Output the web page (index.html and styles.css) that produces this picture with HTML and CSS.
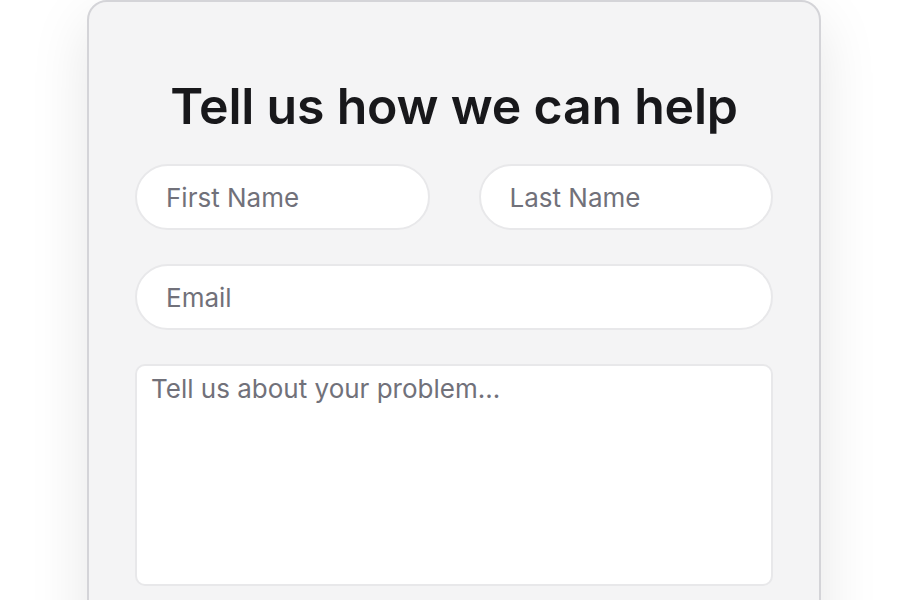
FILE: index.html
```html
<!DOCTYPE html>
<html>
<head>
<meta charset="utf-8">
<link rel="stylesheet" href="styles.css">
</head>
<body>
<div class="card">
  <h1 class="title">Tell us how we can help</h1>
  <form class="form">
    <div class="row">
      <input class="field half" type="text" placeholder="First Name">
      <input class="field half" type="text" placeholder="Last Name">
    </div>
    <input class="field" type="email" placeholder="Email">
    <textarea class="message" placeholder="Tell us about your problem..."></textarea>
  </form>
</div>
</body>
</html>
```
FILE: styles.css
```css
html, body {
  margin: 0;
  padding: 0;
  background: #ffffff;
  font-family: Inter, "Noto Sans", sans-serif;
}
body {
  display: flex;
  justify-content: center;
  height: 600px;
  overflow: hidden;
}
.card {
  box-sizing: border-box;
  width: 734px;
  height: 700px;
  background: #f4f4f5;
  border: 2px solid #d4d4d8;
  border-radius: 20px;
  padding: 72px 46px 40px;
  box-shadow: 0 20px 60px rgba(0, 0, 0, 0.10);
  flex: none;
}
.title {
  margin: 0 0 26px;
  text-align: center;
  font-size: 50px;
  line-height: 64px;
  font-weight: 600;
  color: #18181b;
  letter-spacing: -0.2px;
}
.form {
  display: flex;
  flex-direction: column;
  gap: 34px;
}
.row {
  display: flex;
  gap: 49px;
}
.field {
  box-sizing: border-box;
  height: 66px;
  flex: none;
  border: 2px solid #e8e8ea;
  border-radius: 33px;
  background: #ffffff;
  padding: 0 29px;
  font-family: Inter, "Noto Sans", sans-serif;
  font-size: 26px;
  color: #18181b;
  outline: none;
}
.half {
  flex: 1;
  min-width: 0;
}
.field::placeholder, .message::placeholder {
  color: #71717a;
}
.message {
  box-sizing: border-box;
  height: 222px;
  flex: none;
  border: 2px solid #e8e8ea;
  border-radius: 10px;
  background: #ffffff;
  padding: 6px 14px;
  font-family: Inter, "Noto Sans", sans-serif;
  font-size: 26px;
  line-height: 34px;
  resize: none;
  outline: none;
}
```
